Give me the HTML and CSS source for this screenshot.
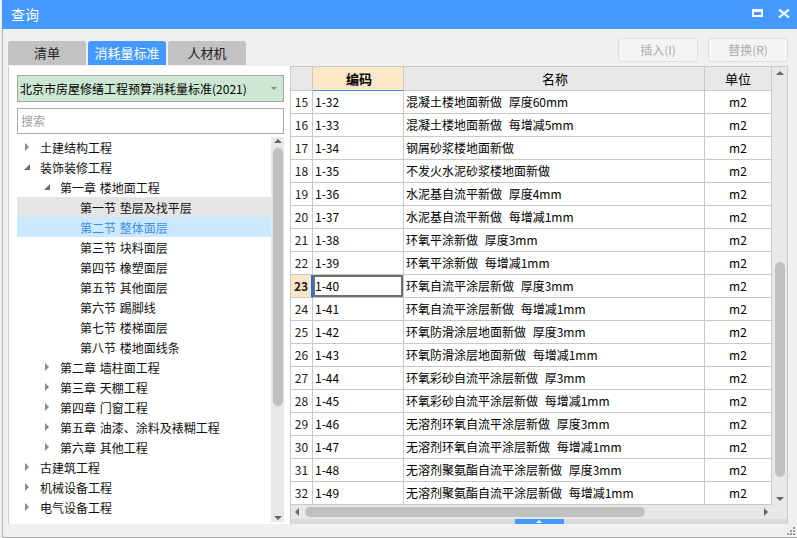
FILE: index.html
```html
<!DOCTYPE html>
<html lang="zh">
<head>
<meta charset="utf-8">
<title>查询</title>
<link rel="stylesheet" href="styles.css">
</head>
<body>
<div class="win">
  <div class="titlebar">
    <span class="title">查询</span>
    <span class="tb-icons">
      <svg class="ic-max" width="11" height="8" viewBox="0 0 11 8"><rect x="1" y="1.5" width="9" height="5.5" fill="none" stroke="#fff" stroke-width="2"/><rect x="0" y="0" width="11" height="3" fill="#fff"/></svg>
      <svg class="ic-close" width="12" height="9" viewBox="0 0 12 9"><path d="M1 0.5 L11 8.5 M11 0.5 L1 8.5" stroke="#fff" stroke-width="2.2"/></svg>
    </span>
  </div>
  <div class="main">
    <div class="toolbar">
      <div class="tabs">
        <div class="tab">清单</div>
        <div class="tab active">消耗量标准</div>
        <div class="tab">人材机</div>
      </div>
      <div class="btns">
        <div class="btn">插入(I)</div>
        <div class="btn">替换(R)</div>
      </div>
    </div>
    <div class="content">
      <div class="left">
        <div class="combo"><span>北京市房屋修缮工程预算消耗量标准(2021)</span><i class="combo-arrow"></i></div>
        <div class="search">搜索</div>
        <div class="tree">
          <div class="tree-list">
            <div class="node l0"><i class="tg col"></i><span>土建结构工程</span></div>
            <div class="node l0"><i class="tg exp"></i><span>装饰装修工程</span></div>
            <div class="node l1"><i class="tg exp"></i><span>第一章 楼地面工程</span></div>
            <div class="node l2 hover"><i class="tg"></i><span>第一节 垫层及找平层</span></div>
            <div class="node l2 sel"><i class="tg"></i><span>第二节 整体面层</span></div>
            <div class="node l2"><i class="tg"></i><span>第三节 块料面层</span></div>
            <div class="node l2"><i class="tg"></i><span>第四节 橡塑面层</span></div>
            <div class="node l2"><i class="tg"></i><span>第五节 其他面层</span></div>
            <div class="node l2"><i class="tg"></i><span>第六节 踢脚线</span></div>
            <div class="node l2"><i class="tg"></i><span>第七节 楼梯面层</span></div>
            <div class="node l2"><i class="tg"></i><span>第八节 楼地面线条</span></div>
            <div class="node l1"><i class="tg col"></i><span>第二章 墙柱面工程</span></div>
            <div class="node l1"><i class="tg col"></i><span>第三章 天棚工程</span></div>
            <div class="node l1"><i class="tg col"></i><span>第四章 门窗工程</span></div>
            <div class="node l1"><i class="tg col"></i><span>第五章 油漆、涂料及裱糊工程</span></div>
            <div class="node l1"><i class="tg col"></i><span>第六章 其他工程</span></div>
            <div class="node l0"><i class="tg col"></i><span>古建筑工程</span></div>
            <div class="node l0"><i class="tg col"></i><span>机械设备工程</span></div>
            <div class="node l0"><i class="tg col"></i><span>电气设备工程</span></div>
            <div class="node l0"><i class="tg col"></i><span>热力设备工程</span></div>
          </div>
          <div class="vs vs-tree">
            <i class="arr-up"></i>
            <div class="thumb-v tree-thumb"></div>
            <i class="arr-down"></i>
          </div>
        </div>
      </div>
      <div class="grid">
        <div class="grid-main">
          <div class="table">
            <div class="row head">
              <div class="c num"></div>
              <div class="c code hsel">编码</div>
              <div class="c name">名称</div>
              <div class="c unit">单位</div>
            </div>
            <div class="row"><div class="c num">15</div><div class="c code">1-32</div><div class="c name">混凝土楼地面新做 厚度60mm</div><div class="c unit">m2</div></div>
            <div class="row"><div class="c num">16</div><div class="c code">1-33</div><div class="c name">混凝土楼地面新做 每增减5mm</div><div class="c unit">m2</div></div>
            <div class="row"><div class="c num">17</div><div class="c code">1-34</div><div class="c name">钢屑砂浆楼地面新做</div><div class="c unit">m2</div></div>
            <div class="row"><div class="c num">18</div><div class="c code">1-35</div><div class="c name">不发火水泥砂浆楼地面新做</div><div class="c unit">m2</div></div>
            <div class="row"><div class="c num">19</div><div class="c code">1-36</div><div class="c name">水泥基自流平新做 厚度4mm</div><div class="c unit">m2</div></div>
            <div class="row"><div class="c num">20</div><div class="c code">1-37</div><div class="c name">水泥基自流平新做 每增减1mm</div><div class="c unit">m2</div></div>
            <div class="row"><div class="c num">21</div><div class="c code">1-38</div><div class="c name">环氧平涂新做 厚度3mm</div><div class="c unit">m2</div></div>
            <div class="row"><div class="c num">22</div><div class="c code">1-39</div><div class="c name">环氧平涂新做 每增减1mm</div><div class="c unit">m2</div></div>
            <div class="row cur"><div class="c num">23</div><div class="c code csel">1-40</div><div class="c name">环氧自流平涂层新做 厚度3mm</div><div class="c unit">m2</div></div>
            <div class="row"><div class="c num">24</div><div class="c code">1-41</div><div class="c name">环氧自流平涂层新做 每增减1mm</div><div class="c unit">m2</div></div>
            <div class="row"><div class="c num">25</div><div class="c code">1-42</div><div class="c name">环氧防滑涂层地面新做 厚度3mm</div><div class="c unit">m2</div></div>
            <div class="row"><div class="c num">26</div><div class="c code">1-43</div><div class="c name">环氧防滑涂层地面新做 每增减1mm</div><div class="c unit">m2</div></div>
            <div class="row"><div class="c num">27</div><div class="c code">1-44</div><div class="c name">环氧彩砂自流平涂层新做 厚3mm</div><div class="c unit">m2</div></div>
            <div class="row"><div class="c num">28</div><div class="c code">1-45</div><div class="c name">环氧彩砂自流平涂层新做 每增减1mm</div><div class="c unit">m2</div></div>
            <div class="row"><div class="c num">29</div><div class="c code">1-46</div><div class="c name">无溶剂环氧自流平涂层新做 厚度3mm</div><div class="c unit">m2</div></div>
            <div class="row"><div class="c num">30</div><div class="c code">1-47</div><div class="c name">无溶剂环氧自流平涂层新做 每增减1mm</div><div class="c unit">m2</div></div>
            <div class="row"><div class="c num">31</div><div class="c code">1-48</div><div class="c name">无溶剂聚氨酯自流平涂层新做 厚度3mm</div><div class="c unit">m2</div></div>
            <div class="row"><div class="c num">32</div><div class="c code">1-49</div><div class="c name">无溶剂聚氨酯自流平涂层新做 每增减1mm</div><div class="c unit">m2</div></div>
          </div>
          <div class="vs vs-grid">
            <i class="arr-up"></i>
            <div class="thumb-v grid-thumb"></div>
            <i class="arr-down"></i>
          </div>
        </div>
        <div class="hs-row">
          <div class="hs">
            <i class="arr-left"></i>
            <div class="thumb-h"></div>
            <i class="arr-right"></i>
          </div>
          <div class="corner"></div>
        </div>
        <div class="grip"><div class="grip-bar"><i class="grip-tri"></i></div></div>
      </div>
    </div>
    <div class="status">
      <svg class="resize" width="8" height="8" viewBox="0 0 8 8" fill="#9a9a9a"><rect x="6" y="0" width="2" height="2"/><rect x="3" y="3" width="2" height="2"/><rect x="6" y="3" width="2" height="2"/><rect x="0" y="6" width="2" height="2"/><rect x="3" y="6" width="2" height="2"/><rect x="6" y="6" width="2" height="2"/></svg>
    </div>
  </div>
</div>
</body>
</html>
```
FILE: styles.css
```css
* { box-sizing: border-box; }
html, body { margin: 0; padding: 0; }
body {
  width: 797px;
  height: 538px;
  overflow: hidden;
  background: #f0f0f0;
  font-family: "Noto Sans CJK SC", "Noto Sans", sans-serif;
  font-size: 12px;
  color: #000;
}
i { display: block; font-style: normal; }

.win {
  margin-left: 2px;
  height: 538px;
  display: flex;
  flex-direction: column;
}

.titlebar {
  height: 29px;
  flex: none;
  background: #4499ff;
  display: flex;
  align-items: center;
  padding-left: 9px;
  padding-right: 7px;
  color: #fff;
}
.title { font-size: 14px; line-height: 29px; flex: 1; }
.tb-icons { display: flex; align-items: center; gap: 15px; margin-top: -3px; }

.main {
  flex: 1;
  display: flex;
  flex-direction: column;
  border-left: 1px solid #b4b4b4;
  min-height: 0;
}

.toolbar {
  height: 36px;
  flex: none;
  display: flex;
  justify-content: space-between;
  padding-left: 5px;
  padding-right: 9px;
}
.tabs { display: flex; gap: 2px; align-self: flex-end; }
.tab {
  width: 78px;
  height: 24px;
  background: #c2c2c2;
  border-radius: 3px 3px 0 0;
  text-align: center;
  line-height: 24px;
  font-size: 13px;
  color: #222;
}
.tab.active { background: #4499ff; color: #fff; }
.btns { display: flex; gap: 10px; margin-top: 9px; }
.btn {
  width: 80px;
  height: 24px;
  border: 1px solid #dcdcdc;
  border-radius: 3px;
  background: #f4f4f4;
  color: #ababab;
  text-align: center;
  line-height: 22px;
  font-size: 12px;
}

.content {
  height: 459px;
  flex: none;
  display: flex;
  margin-left: 5px;
  width: 780px;
}

.left {
  width: 282px;
  margin-top: 1px;
  background: #fff;
  border-left: 1px solid #cfcfcf;
  padding: 9px 6px 2px 8px;
  display: flex;
  flex-direction: column;
}
.combo {
  height: 27px;
  flex: none;
  border: 1px solid #a4a4a4;
  background: #cde8d2;
  display: flex;
  align-items: center;
  justify-content: space-between;
  padding: 0 6px 0 2px;
  font-size: 12px;
  white-space: nowrap;
}
.combo-arrow {
  width: 0; height: 0;
  border-left: 3px solid transparent;
  border-right: 3px solid transparent;
  border-top: 3px solid #8a8a8a;
}
.search {
  height: 26px;
  flex: none;
  margin-top: 6px;
  border: 1px solid #a8a8a8;
  color: #a0a0a0;
  padding-left: 3px;
  line-height: 24px;
  font-size: 12px;
}
.tree {
  flex: 1;
  margin-top: 3px;
  display: flex;
  overflow: hidden;
  min-height: 0;
}
.tree-list { width: 254px; flex: none; overflow: hidden; }
.node {
  height: 20px;
  display: flex;
  align-items: center;
  white-space: nowrap;
  font-size: 12px;
  color: #111;
  word-spacing: 1px;
}
.node.l1 { padding-left: 20px; }
.node.l2 { padding-left: 40px; }
.node.hover { background: #e5e5e5; }
.node.sel { background: #cce8ff; color: #3a8ee6; }
.tg { width: 23px; flex: none; display: flex; align-items: center; height: 20px; }
.tg.col::before {
  content: "";
  display: block;
  width: 0; height: 0;
  margin-left: 8px;
  border-left: 4px solid #8a8a8a;
  border-top: 4px solid transparent;
  border-bottom: 4px solid transparent;
}
.tg.exp::before {
  content: "";
  display: block;
  width: 0; height: 0;
  margin-left: 7px;
  border-bottom: 6px solid #6e6e6e;
  border-left: 6px solid transparent;
}

.vs {
  flex: none;
  background: #e8e8e8;
  display: flex;
  flex-direction: column;
  align-items: center;
}
.vs-tree { width: 13px; padding: 2px 0 2px; }
.vs-grid { width: 15px; padding: 4px 0 4px; }
.arr-up {
  width: 0; height: 0;
  border-left: 4px solid transparent;
  border-right: 4px solid transparent;
  border-bottom: 4px solid #666;
}
.arr-down {
  width: 0; height: 0;
  margin-top: auto;
  border-left: 4px solid transparent;
  border-right: 4px solid transparent;
  border-top: 4px solid #666;
}
.thumb-v { background: #c0c0c0; border-radius: 5px; }
.tree-thumb { width: 10px; height: 258px; margin-top: 5px; }
.grid-thumb { width: 10px; height: 215px; margin-top: 187px; }

.grid {
  width: 498px;
  margin-top: 1px;
  border-top: 1px solid #c8c8c8;
  border-left: 1px solid #c8c8c8;
  border-right: 1px solid #c8c8c8;
  display: flex;
  flex-direction: column;
}
.grid-main { display: flex; height: 438px; flex: none; }
.table { width: 481px; background: #fff; flex: none; }
.row {
  display: grid;
  grid-template-columns: 22px 91px 301px 67px;
  height: 23px;
}
.row.head { height: 24px; }
.c {
  border-right: 1px solid #c8c8c8;
  border-bottom: 1px solid #c8c8c8;
  line-height: 22px;
  white-space: nowrap;
  overflow: hidden;
  font-size: 12px;
}
.head .c {
  background: #e8e8e8;
  text-align: center;
  line-height: 23px;
  font-size: 13px;
}
.head .c.hsel {
  background: #fde7c9;
  font-weight: bold;
  border-bottom-color: #4a90e2;
}
.c.num { text-align: center; color: #222; }
.c.code { padding-left: 2px; }
.c.name { padding-left: 2px; word-spacing: 4px; }
.c.unit { text-align: center; }
.row.cur .c.num {
  background: #fde6c8;
  font-weight: bold;
  border-right: 2px solid #1e6fe8;
}
.c.csel { box-shadow: inset 0 0 0 2px #6e6e6e; }

.hs-row { display: flex; height: 14px; flex: none; }
.hs {
  width: 481px;
  background: #e8e8e8;
  display: flex;
  align-items: center;
  padding: 0 4px 0 4px;
}
.arr-left {
  width: 0; height: 0;
  border-top: 4px solid transparent;
  border-bottom: 4px solid transparent;
  border-right: 4px solid #666;
}
.arr-right {
  width: 0; height: 0;
  margin-left: auto;
  border-top: 4px solid transparent;
  border-bottom: 4px solid transparent;
  border-left: 4px solid #666;
}
.thumb-h { width: 340px; height: 10px; margin-left: 6px; background: #c0c0c0; border-radius: 5px; }
.corner { width: 15px; background: #e8e8e8; }

.grip {
  height: 5px;
  flex: none;
  background: #dadada;
  display: flex;
  justify-content: center;
}
.grip-bar {
  width: 49px;
  height: 5px;
  background: #4499ff;
  display: flex;
  justify-content: center;
  align-items: center;
}
.grip-tri {
  width: 0; height: 0;
  border-left: 3px solid transparent;
  border-right: 3px solid transparent;
  border-bottom: 3px solid #fff;
}

.status {
  flex: 1;
  border-bottom: 1px solid #a8a8a8;
  display: flex;
  justify-content: flex-end;
  align-items: flex-end;
  padding: 0 2px 2px 0;
}
```
